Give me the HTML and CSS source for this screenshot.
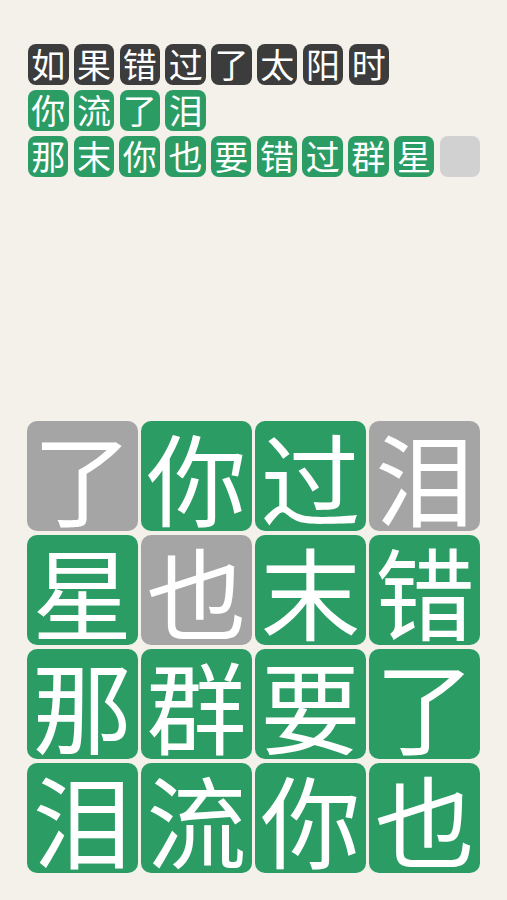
FILE: index.html
```html
<!DOCTYPE html>
<html lang="zh">
<head>
<meta charset="utf-8">
<link rel="stylesheet" href="styles.css">
</head>
<body>
<div class="page">
  <div class="poem">
    <div class="line">
      <span class="t dark">如</span><span class="t dark">果</span><span class="t dark">错</span><span class="t dark">过</span><span class="t dark">了</span><span class="t dark">太</span><span class="t dark">阳</span><span class="t dark">时</span>
    </div>
    <div class="line">
      <span class="t green">你</span><span class="t green">流</span><span class="t green">了</span><span class="t green">泪</span>
    </div>
    <div class="line">
      <span class="t green">那</span><span class="t green">末</span><span class="t green">你</span><span class="t green">也</span><span class="t green">要</span><span class="t green">错</span><span class="t green">过</span><span class="t green">群</span><span class="t green">星</span><span class="t empty"></span>
    </div>
  </div>
  <div class="board">
    <div class="cell gray">了</div><div class="cell green">你</div><div class="cell green">过</div><div class="cell gray">泪</div>
    <div class="cell green">星</div><div class="cell gray">也</div><div class="cell green">末</div><div class="cell green">错</div>
    <div class="cell green">那</div><div class="cell green">群</div><div class="cell green">要</div><div class="cell green">了</div>
    <div class="cell green">泪</div><div class="cell green">流</div><div class="cell green">你</div><div class="cell green">也</div>
  </div>
</div>
</body>
</html>
```
FILE: styles.css
```css
html, body {
  margin: 0;
  padding: 0;
  background: #f4f0ea;
}
body {
  font-family: "Noto Sans CJK SC", "Noto Sans", sans-serif;
}
.page {
  box-sizing: border-box;
  height: 900px;
  padding: 44px 27px 27px 27px;
  display: flex;
  flex-direction: column;
  justify-content: space-between;
}
.poem {
  display: flex;
  flex-direction: column;
  gap: 5.5px;
  padding-left: 1px;
}
.line {
  display: flex;
  gap: 5.3px;
}
.t {
  width: 40.5px;
  height: 40.5px;
  border-radius: 8px;
  color: #fff;
  font-size: 34px;
  font-weight: 400;
  display: flex;
  align-items: center;
  justify-content: center;
  line-height: 1;
}
.dark { background: #3c3c3c; }
.green { background: #2a9c64; }
.gray { background: #a5a5a5; }
.empty { background: #d1d1d1; }
.board {
  display: grid;
  grid-template-columns: repeat(4, 1fr);
  grid-auto-rows: 110.5px;
  gap: 3.5px;
  width: 453px;
}
.cell {
  border-radius: 10px;
  color: #fff;
  font-size: 100px;
  font-weight: 400;
  line-height: 1;
  display: flex;
  align-items: center;
  justify-content: center;
}
```
